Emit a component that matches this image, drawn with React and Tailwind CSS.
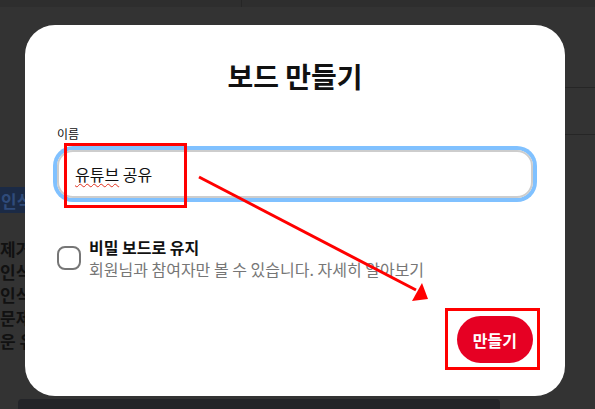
import { useState } from "react";

const font = { fontFamily: '"Noto Sans CJK KR", "Noto Sans", sans-serif' };

const BackdropPage = () => (
  <div className="flex h-full w-full flex-col">
    <div className="flex h-[7px] shrink-0 bg-[#2e2e2e]">
      <div className="w-[242px] border-r border-[#262626]" />
    </div>
    <div className="flex flex-1">
      <div className="flex w-[60px] flex-col pt-[180px] text-[17px] font-bold leading-[23px] text-[#111]">
        <div className="mb-[24px] flex h-[26px] items-center bg-[#1b2a45] pl-[1px] text-[#2f4b7a]">인식</div>
        <div>제거</div>
        <div>인식</div>
        <div>인식</div>
        <div>문제</div>
        <div>운 유</div>
      </div>
      <div className="flex-1" />
      <div className="flex w-[40px] flex-col pt-[80px]">
        <div className="h-[1px] bg-[#262626]" />
        <div className="h-[46px]" />
        <div className="h-[1px] bg-[#262626]" />
      </div>
    </div>
    <div className="ml-[18px] h-[10px] w-[482px] shrink-0 rounded-t-[4px] bg-[#232428]" />
  </div>
);

const Annotations = () => (
  <svg className="pointer-events-none absolute inset-0" width="595" height="409" viewBox="0 0 595 409">
    <rect x="65.5" y="144.5" width="120" height="62" fill="none" stroke="#ff0000" strokeWidth="3" />
    <rect x="446.5" y="309.5" width="92" height="59" fill="none" stroke="#ff0000" strokeWidth="3" />
    <line x1="199" y1="177" x2="416" y2="290" stroke="#ff0000" strokeWidth="3" />
    <polygon points="422,283 428,299 412,301" fill="#ff0000" />
  </svg>
);

export default function App() {
  const [name, setName] = useState("유튜브 공유");
  const [secret, setSecret] = useState(false);

  return (
    <div className="relative h-[409px] w-[595px] overflow-hidden bg-[#333333]" style={font}>
      <BackdropPage />

      {/* modal */}
      <div className="absolute left-[25px] top-[25px] flex h-[371px] w-[540px] flex-col rounded-[30px] bg-white px-8 pb-[33px] pt-[26px]">
        <h1 className="text-center text-[28px] font-bold leading-[50px] text-[#111]">보드 만들기</h1>

        <label className="mt-[25px] text-[12px] leading-[16px] text-[#111]">이름</label>
        <div className="mt-[8px] flex h-[48px] items-center rounded-2xl border-2 border-[#cdcdcd] px-4 shadow-[0_0_0_4px_#80c1ff]">
          <span className="text-[16px] text-[#111]">
            <span className="underline decoration-[#e0301e] decoration-wavy decoration-1 underline-offset-[2px]">유튜브</span> 공유
          </span>
          <input value={name} onChange={(e) => setName(e.target.value)} className="hidden" />
        </div>

        <div className="mt-[38px] flex items-center gap-2">
          <button
            onClick={() => setSecret(!secret)}
            className="h-6 w-6 shrink-0 rounded-lg border-2 border-[#767676] bg-white"
          />
          <div className="flex flex-col">
            <span className="text-[16px] font-semibold leading-[22px] text-[#111]">비밀 보드로 유지</span>
            <span className="text-[16px] leading-[22px] text-[#767676]">
              회원님과 참여자만 볼 수 있습니다. 자세히 알아보기
            </span>
          </div>
        </div>

        <div className="mt-auto flex justify-end">
          <button className="h-[47px] rounded-full bg-[#e60023] px-4 text-[16px] font-bold text-white">만들기</button>
        </div>
      </div>

      <Annotations />
    </div>
  );
}
